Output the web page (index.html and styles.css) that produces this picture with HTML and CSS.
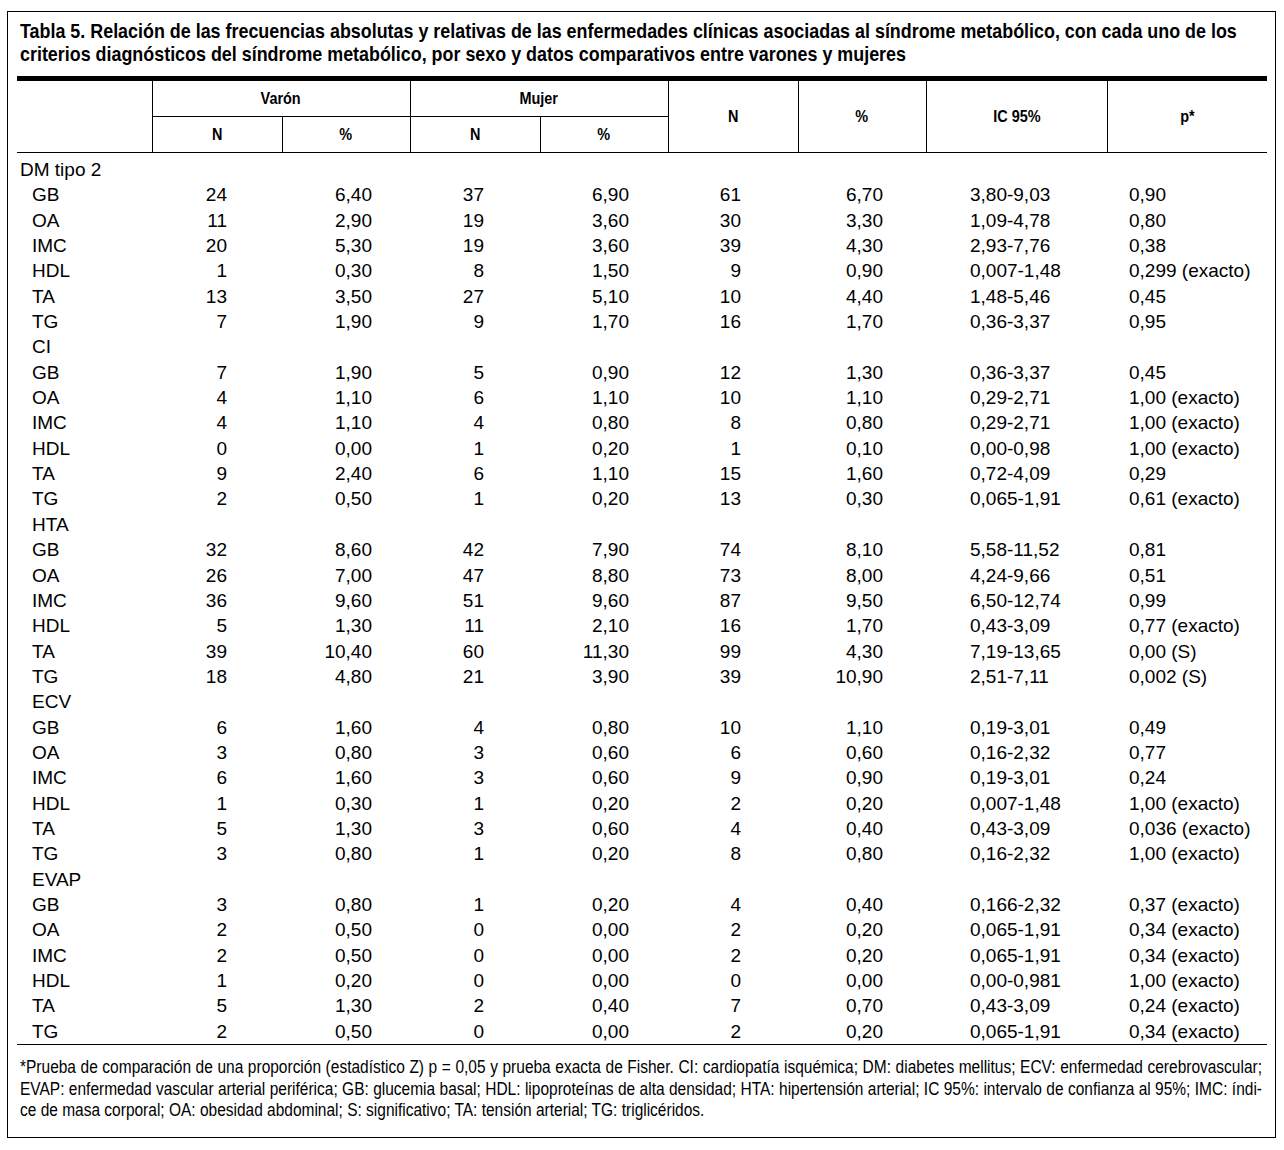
FILE: index.html
```html
<!DOCTYPE html>
<html lang="es">
<head>
<meta charset="utf-8">
<title>Tabla 5</title>
<link rel="stylesheet" href="styles.css">
</head>
<body>
<div class="frame">
  <h1 class="title"><span class="tl">Tabla 5. Relación de las frecuencias absolutas y relativas de las enfermedades clínicas asociadas al síndrome metabólico, con cada uno de los</span> <span class="tl">criterios diagnósticos del síndrome metabólico, por sexo y datos comparativos entre varones y mujeres</span></h1>
  <table class="data">
    <colgroup>
      <col class="c-label"><col class="c-n"><col class="c-p"><col class="c-n"><col class="c-p"><col class="c-n"><col class="c-p"><col class="c-ic"><col class="c-pv">
    </colgroup>
    <thead>
      <tr class="h1">
        <th rowspan="2" class="blank"></th>
        <th colspan="2"><span>Varón</span></th>
        <th colspan="2"><span>Mujer</span></th>
        <th rowspan="2"><span>N</span></th>
        <th rowspan="2"><span>%</span></th>
        <th rowspan="2"><span>IC 95%</span></th>
        <th rowspan="2"><span>p*</span></th>
      </tr>
      <tr class="h2">
        <th><span>N</span></th><th><span>%</span></th><th><span>N</span></th><th><span>%</span></th>
      </tr>
    </thead>
    <tbody>
      <tr class="first"><td class="lbl">DM tipo 2</td><td></td><td></td><td></td><td></td><td></td><td></td><td></td><td></td></tr>
      <tr><td class="sub">GB</td><td class="vn">24</td><td class="vp">6,40</td><td class="mn">37</td><td class="mp">6,90</td><td class="tn">61</td><td class="tp">6,70</td><td class="ic">3,80-9,03</td><td class="pv">0,90</td></tr>
      <tr><td class="sub">OA</td><td class="vn">11</td><td class="vp">2,90</td><td class="mn">19</td><td class="mp">3,60</td><td class="tn">30</td><td class="tp">3,30</td><td class="ic">1,09-4,78</td><td class="pv">0,80</td></tr>
      <tr><td class="sub">IMC</td><td class="vn">20</td><td class="vp">5,30</td><td class="mn">19</td><td class="mp">3,60</td><td class="tn">39</td><td class="tp">4,30</td><td class="ic">2,93-7,76</td><td class="pv">0,38</td></tr>
      <tr><td class="sub">HDL</td><td class="vn">1</td><td class="vp">0,30</td><td class="mn">8</td><td class="mp">1,50</td><td class="tn">9</td><td class="tp">0,90</td><td class="ic">0,007-1,48</td><td class="pv">0,299 (exacto)</td></tr>
      <tr><td class="sub">TA</td><td class="vn">13</td><td class="vp">3,50</td><td class="mn">27</td><td class="mp">5,10</td><td class="tn">10</td><td class="tp">4,40</td><td class="ic">1,48-5,46</td><td class="pv">0,45</td></tr>
      <tr><td class="sub">TG</td><td class="vn">7</td><td class="vp">1,90</td><td class="mn">9</td><td class="mp">1,70</td><td class="tn">16</td><td class="tp">1,70</td><td class="ic">0,36-3,37</td><td class="pv">0,95</td></tr>
      <tr><td class="sub">CI</td><td></td><td></td><td></td><td></td><td></td><td></td><td></td><td></td></tr>
      <tr><td class="sub">GB</td><td class="vn">7</td><td class="vp">1,90</td><td class="mn">5</td><td class="mp">0,90</td><td class="tn">12</td><td class="tp">1,30</td><td class="ic">0,36-3,37</td><td class="pv">0,45</td></tr>
      <tr><td class="sub">OA</td><td class="vn">4</td><td class="vp">1,10</td><td class="mn">6</td><td class="mp">1,10</td><td class="tn">10</td><td class="tp">1,10</td><td class="ic">0,29-2,71</td><td class="pv">1,00 (exacto)</td></tr>
      <tr><td class="sub">IMC</td><td class="vn">4</td><td class="vp">1,10</td><td class="mn">4</td><td class="mp">0,80</td><td class="tn">8</td><td class="tp">0,80</td><td class="ic">0,29-2,71</td><td class="pv">1,00 (exacto)</td></tr>
      <tr><td class="sub">HDL</td><td class="vn">0</td><td class="vp">0,00</td><td class="mn">1</td><td class="mp">0,20</td><td class="tn">1</td><td class="tp">0,10</td><td class="ic">0,00-0,98</td><td class="pv">1,00 (exacto)</td></tr>
      <tr><td class="sub">TA</td><td class="vn">9</td><td class="vp">2,40</td><td class="mn">6</td><td class="mp">1,10</td><td class="tn">15</td><td class="tp">1,60</td><td class="ic">0,72-4,09</td><td class="pv">0,29</td></tr>
      <tr><td class="sub">TG</td><td class="vn">2</td><td class="vp">0,50</td><td class="mn">1</td><td class="mp">0,20</td><td class="tn">13</td><td class="tp">0,30</td><td class="ic">0,065-1,91</td><td class="pv">0,61 (exacto)</td></tr>
      <tr><td class="sub">HTA</td><td></td><td></td><td></td><td></td><td></td><td></td><td></td><td></td></tr>
      <tr><td class="sub">GB</td><td class="vn">32</td><td class="vp">8,60</td><td class="mn">42</td><td class="mp">7,90</td><td class="tn">74</td><td class="tp">8,10</td><td class="ic">5,58-11,52</td><td class="pv">0,81</td></tr>
      <tr><td class="sub">OA</td><td class="vn">26</td><td class="vp">7,00</td><td class="mn">47</td><td class="mp">8,80</td><td class="tn">73</td><td class="tp">8,00</td><td class="ic">4,24-9,66</td><td class="pv">0,51</td></tr>
      <tr><td class="sub">IMC</td><td class="vn">36</td><td class="vp">9,60</td><td class="mn">51</td><td class="mp">9,60</td><td class="tn">87</td><td class="tp">9,50</td><td class="ic">6,50-12,74</td><td class="pv">0,99</td></tr>
      <tr><td class="sub">HDL</td><td class="vn">5</td><td class="vp">1,30</td><td class="mn">11</td><td class="mp">2,10</td><td class="tn">16</td><td class="tp">1,70</td><td class="ic">0,43-3,09</td><td class="pv">0,77 (exacto)</td></tr>
      <tr><td class="sub">TA</td><td class="vn">39</td><td class="vp">10,40</td><td class="mn">60</td><td class="mp">11,30</td><td class="tn">99</td><td class="tp">4,30</td><td class="ic">7,19-13,65</td><td class="pv">0,00 (S)</td></tr>
      <tr><td class="sub">TG</td><td class="vn">18</td><td class="vp">4,80</td><td class="mn">21</td><td class="mp">3,90</td><td class="tn">39</td><td class="tp">10,90</td><td class="ic">2,51-7,11</td><td class="pv">0,002 (S)</td></tr>
      <tr><td class="sub">ECV</td><td></td><td></td><td></td><td></td><td></td><td></td><td></td><td></td></tr>
      <tr><td class="sub">GB</td><td class="vn">6</td><td class="vp">1,60</td><td class="mn">4</td><td class="mp">0,80</td><td class="tn">10</td><td class="tp">1,10</td><td class="ic">0,19-3,01</td><td class="pv">0,49</td></tr>
      <tr><td class="sub">OA</td><td class="vn">3</td><td class="vp">0,80</td><td class="mn">3</td><td class="mp">0,60</td><td class="tn">6</td><td class="tp">0,60</td><td class="ic">0,16-2,32</td><td class="pv">0,77</td></tr>
      <tr><td class="sub">IMC</td><td class="vn">6</td><td class="vp">1,60</td><td class="mn">3</td><td class="mp">0,60</td><td class="tn">9</td><td class="tp">0,90</td><td class="ic">0,19-3,01</td><td class="pv">0,24</td></tr>
      <tr><td class="sub">HDL</td><td class="vn">1</td><td class="vp">0,30</td><td class="mn">1</td><td class="mp">0,20</td><td class="tn">2</td><td class="tp">0,20</td><td class="ic">0,007-1,48</td><td class="pv">1,00 (exacto)</td></tr>
      <tr><td class="sub">TA</td><td class="vn">5</td><td class="vp">1,30</td><td class="mn">3</td><td class="mp">0,60</td><td class="tn">4</td><td class="tp">0,40</td><td class="ic">0,43-3,09</td><td class="pv">0,036 (exacto)</td></tr>
      <tr><td class="sub">TG</td><td class="vn">3</td><td class="vp">0,80</td><td class="mn">1</td><td class="mp">0,20</td><td class="tn">8</td><td class="tp">0,80</td><td class="ic">0,16-2,32</td><td class="pv">1,00 (exacto)</td></tr>
      <tr><td class="sub">EVAP</td><td></td><td></td><td></td><td></td><td></td><td></td><td></td><td></td></tr>
      <tr><td class="sub">GB</td><td class="vn">3</td><td class="vp">0,80</td><td class="mn">1</td><td class="mp">0,20</td><td class="tn">4</td><td class="tp">0,40</td><td class="ic">0,166-2,32</td><td class="pv">0,37 (exacto)</td></tr>
      <tr><td class="sub">OA</td><td class="vn">2</td><td class="vp">0,50</td><td class="mn">0</td><td class="mp">0,00</td><td class="tn">2</td><td class="tp">0,20</td><td class="ic">0,065-1,91</td><td class="pv">0,34 (exacto)</td></tr>
      <tr><td class="sub">IMC</td><td class="vn">2</td><td class="vp">0,50</td><td class="mn">0</td><td class="mp">0,00</td><td class="tn">2</td><td class="tp">0,20</td><td class="ic">0,065-1,91</td><td class="pv">0,34 (exacto)</td></tr>
      <tr><td class="sub">HDL</td><td class="vn">1</td><td class="vp">0,20</td><td class="mn">0</td><td class="mp">0,00</td><td class="tn">0</td><td class="tp">0,00</td><td class="ic">0,00-0,981</td><td class="pv">1,00 (exacto)</td></tr>
      <tr><td class="sub">TA</td><td class="vn">5</td><td class="vp">1,30</td><td class="mn">2</td><td class="mp">0,40</td><td class="tn">7</td><td class="tp">0,70</td><td class="ic">0,43-3,09</td><td class="pv">0,24 (exacto)</td></tr>
      <tr><td class="sub">TG</td><td class="vn">2</td><td class="vp">0,50</td><td class="mn">0</td><td class="mp">0,00</td><td class="tn">2</td><td class="tp">0,20</td><td class="ic">0,065-1,91</td><td class="pv">0,34 (exacto)</td></tr>
    </tbody>
  </table>
  <div class="note">
    <span class="line">*Prueba de comparación de una proporción (estadístico Z) p = 0,05 y prueba exacta de Fisher. CI: cardiopatía isquémica; DM: diabetes mellitus; ECV: enfermedad cerebrovascular;</span>
    <span class="line">EVAP: enfermedad vascular arterial periférica; GB: glucemia basal; HDL: lipoproteínas de alta densidad; HTA: hipertensión arterial; IC 95%: intervalo de confianza al 95%; IMC: índi-</span>
    <span class="line end">ce de masa corporal; OA: obesidad abdominal; S: significativo; TA: tensión arterial; TG: triglicéridos.</span>
  </div>
</div>
</body>
</html>
```

FILE: styles.css
```css
html, body {
  margin: 0;
  padding: 0;
  background: #fff;
  color: #000;
}

body {
  padding: 11px 8px 12px 7px;
}

.frame {
  border: 1px solid #000;
  padding: 0 9px 17px 9px;
  height: 1127px;
  box-sizing: border-box;
  overflow: hidden;
}

/* Title: condensed bold (Helvetica Condensed look) */
.title {
  margin: 0;
  padding: 7px 0 0 3px;
  font-family: "Liberation Sans", Arial, sans-serif;
  font-weight: bold;
  font-size: 21px;
  line-height: 23px;
  height: 64px;
  box-sizing: border-box;
}

.title .tl {
  display: block;
  width: max-content;
  white-space: nowrap;
  transform: scaleX(0.852);
  transform-origin: 0 0;
}

.data {
  width: 1249px;
  table-layout: fixed;
  border-collapse: collapse;
  border-top: 5px solid #000;
  border-bottom: 1px solid #000;
  font-family: "Liberation Sans", Arial, sans-serif;
  font-size: 19px;
}

.c-label { width: 135px; }
.c-n { width: 130px; }
.c-p { width: 128px; }
.c-ic { width: 181px; }
.c-pv { width: 160px; }

.data th {
  font-family: "Liberation Sans", Arial, sans-serif;
  font-weight: bold;
  font-size: 17px;
  text-align: center;
  padding: 0;
  border-left: 1px solid #000;
  border-bottom: 1px solid #000;
}

.data th span {
  display: inline-block;
  transform: scaleX(0.85);
}

.data th.blank { border-left: none; }

.data tr.h1 th { height: 35px; }
.data tr.h2 th { height: 35px; }

.data td {
  padding: 0;
  height: 25.35px;
  line-height: 25.35px;
  white-space: nowrap;
  vertical-align: middle;
}

.data tr.first td {
  padding-top: 4px;
}

.data td.lbl { padding-left: 3px; }
.data td.sub { padding-left: 15px; }

.data td.vn { text-align: right; padding-right: 55px; }
.data td.vp { text-align: right; padding-right: 38px; }
.data td.mn { text-align: right; padding-right: 56px; }
.data td.mp { text-align: right; padding-right: 39px; }
.data td.tn { text-align: right; padding-right: 57px; }
.data td.tp { text-align: right; padding-right: 43px; }
.data td.ic { text-align: left; padding-left: 44px; }
.data td.pv { text-align: left; padding-left: 22px; }

/* Footnote: condensed regular, justified */
.note {
  padding: 12px 4px 0 3px;
  font-family: "Liberation Sans", Arial, sans-serif;
  font-size: 17.5px;
  line-height: 21.5px;
}

.note .line {
  display: block;
  width: calc(100% / 0.885);
  transform: scaleX(0.885);
  transform-origin: 0 0;
  text-align: justify;
  text-align-last: justify;
}

.note .line.end {
  text-align-last: left;
}
```
